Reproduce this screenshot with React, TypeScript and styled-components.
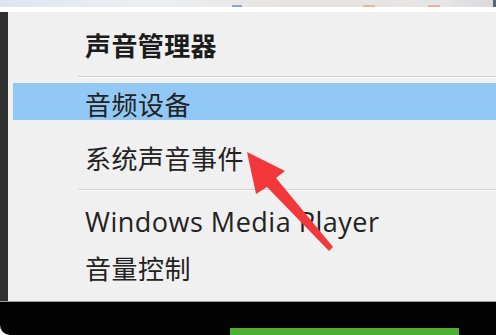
import styled, { createGlobalStyle } from "styled-components";

const GlobalStyle = createGlobalStyle`
  html, body {
    margin: 0;
    padding: 0;
    background: #ffffff;
    overflow: hidden;
  }
`;

const cjk = `"Noto Sans CJK SC", "Noto Sans", sans-serif`;
const latin = `"Open Sans", "Noto Sans CJK SC", sans-serif`;

export default function App() {
  return (
    <>
      <GlobalStyle />
      <Page>
        <TopStrip>
          <Mark $left={232} $w={10} $color="#4a8fd8" />
          <Mark $left={121} $w={12} $color="#f0a070" />
          <Mark $left={53} $w={12} $color="#f0a070" />
          <Corner />
        </TopStrip>
        <Frame>
          <Menu>
            <Header>声音管理器</Header>
            <Separator />
            <Item $h={37} $mt={6} $active $shift={3}>音频设备</Item>
            <Item $h={63} $mt={6} $shift={0}>系统声音事件</Item>
            <Separator />
            <Item $h={62} $latin $shift={0}>Windows Media Player</Item>
            <Item $h={30} $shift={0}>音量控制</Item>
          </Menu>
        </Frame>
        <Footer>
          <GreenBar />
        </Footer>
        <Arrow viewBox="0 0 496 335">
          <path d="M247 152 L285 171 L276 178 L333 247 L329 251 L267 187 L256 194 Z" fill="#f2383a" />
        </Arrow>
      </Page>
    </>
  );
}

const Page = styled.div`
  position: relative;
  width: 496px;
  height: 335px;
  display: flex;
  flex-direction: column;
  background: #ffffff;
`;

const TopStrip = styled.div`
  position: relative;
  height: 7px;
  flex: none;
  display: flex;
  align-items: flex-end;
  background: linear-gradient(90deg, #dde6f0 0%, #eceff3 30%, #e7e3de 60%, #e6e6e6 90%, #d8d8dc 100%);
  margin-bottom: 5px;
`;

const Mark = styled.span<{ $left: number; $w: number; $color: string }>`
  margin-left: ${(p) => p.$left}px;
  width: ${(p) => p.$w}px;
  height: 2px;
  background: ${(p) => p.$color};
  opacity: 0.7;
`;

const Corner = styled.span`
  margin-left: auto;
  width: 3px;
  height: 7px;
  background: #5a6478;
`;

const Frame = styled.div`
  flex: none;
  height: 289px;
  display: flex;
  border-left: 8px solid #2f2f2f;
  background: #f0f0f0;
`;

const Menu = styled.div`
  flex: 1;
  display: flex;
  flex-direction: column;
`;

const Header = styled.div`
  height: 64px;
  display: flex;
  align-items: center;
  padding-left: 77px;
  font-family: ${cjk};
  font-weight: 700;
  font-size: 26px;
  color: #1c1c1c;
  letter-spacing: 0.4px;
`;

const Separator = styled.div`
  height: 1px;
  margin-left: 70px;
  background: #d0d0d0;
  box-shadow: 0 1px 0 #fbfbfb;
`;

const Item = styled.div<{ $h: number; $mt?: number; $active?: boolean; $latin?: boolean; $shift: number }>`
  height: ${(p) => p.$h}px;
  margin-top: ${(p) => p.$mt ?? 0}px;
  margin-left: 5px;
  display: flex;
  align-items: center;
  padding-left: 72px;
  padding-top: ${(p) => p.$shift}px;
  box-sizing: border-box;
  background: ${(p) => (p.$active ? "#91c8f6" : "transparent")};
  font-family: ${(p) => (p.$latin ? latin : cjk)};
  font-size: ${(p) => (p.$latin ? "27px" : "26px")};
  color: #222222;
  letter-spacing: 0.5px;
  white-space: nowrap;
`;

const Footer = styled.div`
  flex: 1;
  display: flex;
  align-items: flex-end;
  padding-left: 230px;
  background: #030303;
  border-top: 1px solid #9a9a9a;
  border-bottom-left-radius: 10px;
`;

const GreenBar = styled.div`
  width: 229px;
  height: 7px;
  background: #4eb033;
`;

const Arrow = styled.svg`
  position: absolute;
  inset: 0;
  width: 496px;
  height: 335px;
  pointer-events: none;
`;
